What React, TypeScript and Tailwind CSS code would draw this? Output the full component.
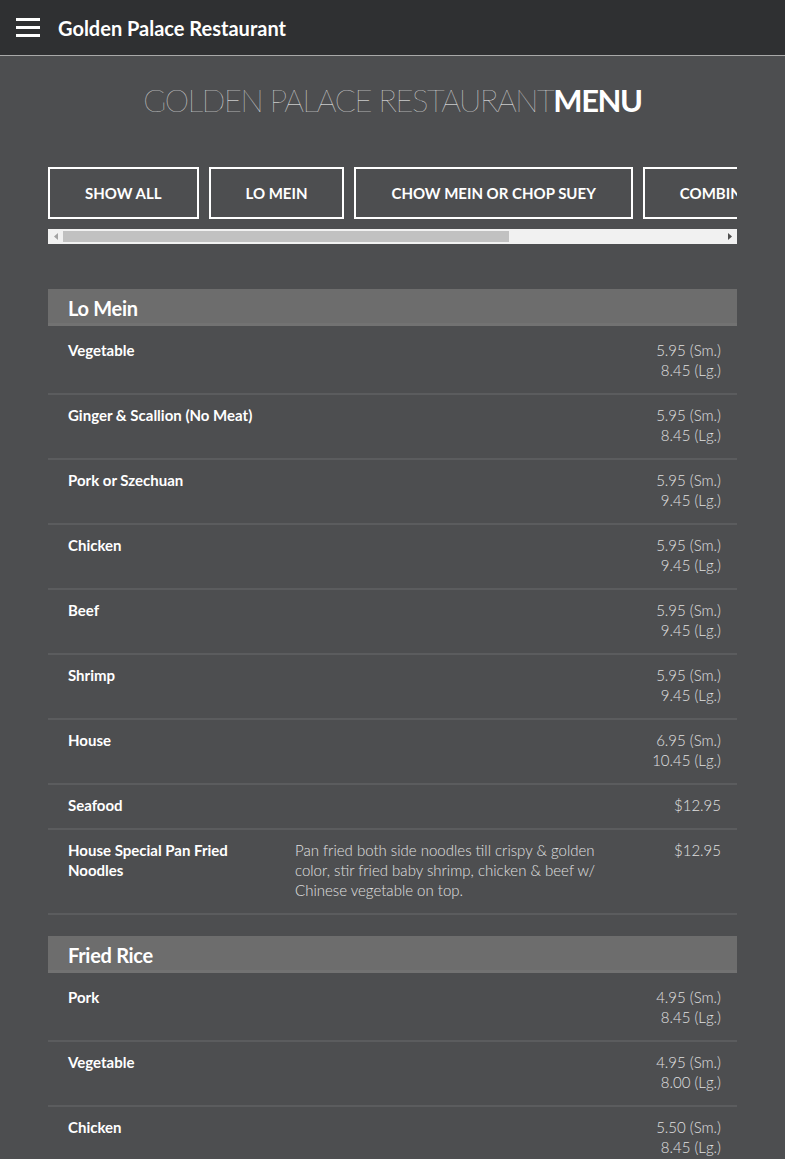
import React from 'react';

type Item = {
  name: string;
  desc?: string;
  prices: string[];
};

type Section = {
  title: string;
  items: Item[];
};

const CATEGORIES = ['Show All', 'Lo Mein', 'Chow Mein or Chop Suey', 'Combination Plates', 'Fried Rice'];

const SECTIONS: Section[] = [
  {
    title: 'Lo Mein',
    items: [
      { name: 'Vegetable', prices: ['5.95 (Sm.)', '8.45 (Lg.)'] },
      { name: 'Ginger & Scallion (No Meat)', prices: ['5.95 (Sm.)', '8.45 (Lg.)'] },
      { name: 'Pork or Szechuan', prices: ['5.95 (Sm.)', '9.45 (Lg.)'] },
      { name: 'Chicken', prices: ['5.95 (Sm.)', '9.45 (Lg.)'] },
      { name: 'Beef', prices: ['5.95 (Sm.)', '9.45 (Lg.)'] },
      { name: 'Shrimp', prices: ['5.95 (Sm.)', '9.45 (Lg.)'] },
      { name: 'House', prices: ['6.95 (Sm.)', '10.45 (Lg.)'] },
      { name: 'Seafood', prices: ['$12.95'] },
      {
        name: 'House Special Pan Fried Noodles',
        desc: 'Pan fried both side noodles till crispy & golden color, stir fried baby shrimp, chicken & beef w/ Chinese vegetable on top.',
        prices: ['$12.95'],
      },
    ],
  },
  {
    title: 'Fried Rice',
    items: [
      { name: 'Pork', prices: ['4.95 (Sm.)', '8.45 (Lg.)'] },
      { name: 'Vegetable', prices: ['4.95 (Sm.)', '8.00 (Lg.)'] },
      { name: 'Chicken', prices: ['5.50 (Sm.)', '8.45 (Lg.)'] },
      { name: 'Beef', prices: ['5.50 (Sm.)', '8.95 (Lg.)'] },
      { name: 'Shrimp', prices: ['5.50 (Sm.)', '8.95 (Lg.)'] },
    ],
  },
];

const MenuRow: React.FC<{ item: Item }> = ({ item }) => (
  <div className="flex border-b-2 border-[#5b5c5e] pt-[10px] pb-[13px] pl-5 pr-4 text-[15px] leading-5">
    <div className="w-[207px] shrink-0 font-bold text-white">{item.name}</div>
    <div className="ml-5 w-[310px] shrink-0 font-light text-[#e0e0e0]">{item.desc}</div>
    <div className="ml-auto flex flex-col items-end font-light text-[#e0e0e0]">
      {item.prices.map((p) => (
        <span key={p}>{p}</span>
      ))}
    </div>
  </div>
);

// the browser hides real scrollbars, so the bar under the tabs is drawn
const ScrollBar = () => (
  <div className="flex h-[15px] items-center bg-[#f1f1f1]">
    <div className="flex w-[15px] justify-center">
      <svg width="4" height="7" viewBox="0 0 4 7">
        <path d="M4 0 L0 3.5 L4 7 Z" fill="#a3a3a3" />
      </svg>
    </div>
    <div className="flex-1 self-stretch py-[2px]">
      <div className="h-full w-[67.7%] bg-[#c1c1c1]" />
    </div>
    <div className="flex w-[15px] justify-center">
      <svg width="4" height="7" viewBox="0 0 4 7">
        <path d="M0 0 L4 3.5 L0 7 Z" fill="#505050" />
      </svg>
    </div>
  </div>
);

export default function App() {
  return (
    <div className="min-h-screen bg-[#4d4e50] font-['Lato','Open_Sans',sans-serif] text-white">
      {/* Top bar */}
      <header className="flex h-14 items-center border-b border-[#a9a9a9] bg-[#2f3032] px-4">
        <button className="flex w-6 flex-col gap-[5px]" aria-label="menu">
          <span className="block h-[3px] w-6 bg-white" />
          <span className="block h-[3px] w-6 bg-white" />
          <span className="block h-[3px] w-6 bg-white" />
        </button>
        <h1 className="ml-[18px] text-[20px] font-bold leading-none">Golden Palace Restaurant</h1>
      </header>

      <main className="px-12 pb-10">
        <h2 className="pt-[28px] text-center text-[31px] leading-[32px] tracking-[-1.4px]">
          <span className="font-extralight">GOLDEN PALACE RESTAURANT</span>
          <span className="font-bold">MENU</span>
        </h2>

        {/* Category filter */}
        <div className="mt-[51px]">
          <div className="overflow-hidden">
            <div className="flex w-max gap-[10px] pb-[10px]">
              {CATEGORIES.map((c) => (
                <button
                  key={c}
                  className="h-[52px] whitespace-nowrap border-2 border-white px-[35px] text-[15px] font-bold uppercase text-white"
                >
                  {c}
                </button>
              ))}
            </div>
          </div>
          <ScrollBar />
        </div>

        <div className="mt-[45px] flex flex-col gap-[21px]">
          {SECTIONS.map((s) => (
            <section key={s.title}>
              <div className="mb-1 flex h-[37px] items-center border-b-[3px] border-[#727272] bg-[#6d6d6d] px-5 pt-[3px]">
                <h3 className="text-[20px] font-bold tracking-[-0.3px]">{s.title}</h3>
              </div>
              {s.items.map((it) => (
                <MenuRow key={it.name} item={it} />
              ))}
            </section>
          ))}
        </div>
      </main>
    </div>
  );
}
